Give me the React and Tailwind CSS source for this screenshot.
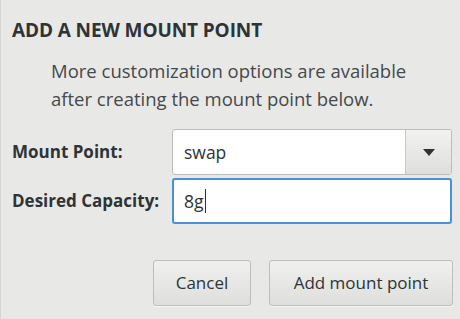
const font = { fontFamily: '"Open Sans", "DejaVu Sans", sans-serif' };

export default function App() {
  return (
    <div
      className="w-[460px] h-[319px] bg-[#e8e8e7] border-l border-[#d6d6d5] text-[#2e3436] flex flex-col"
      style={font}
    >
      <h1 className="pl-[11px] pt-[17px] text-[19px] font-bold leading-[26px] tracking-[-0.1px]">
        ADD A NEW MOUNT POINT
      </h1>

      <p className="pl-[50px] pt-[14px] text-[18.5px] leading-[28px] text-[#45494b]">
        More customization options are available
        <br />
        after creating the mount point below.
      </p>

      <div className="mt-[16px] grid grid-cols-[160px_280px] gap-y-[3px] pl-[11px] items-center">
        <label className="text-[17px] font-bold">Mount Point:</label>
        <div className="h-[46px] flex rounded-[3px] border border-[#bdbdbb] bg-white overflow-hidden">
          <div className="flex-1 flex items-center pl-[11px] text-[17.5px]">swap</div>
          <div className="w-[46px] flex items-center justify-center border-l border-[#c8c8c6] bg-gradient-to-b from-[#f2f2f1] to-[#dededd]">
            <svg width="12" height="7" viewBox="0 0 12 7">
              <path d="M0 0h12L6 7z" fill="#2e3436" />
            </svg>
          </div>
        </div>

        <label className="text-[17px] font-bold">Desired Capacity:</label>
        <div className="h-[46px] flex items-center rounded-[3px] border-2 border-[#4a90d9] bg-white pl-[10px] text-[17.5px]">
          8g<span className="inline-block w-px h-[24px] bg-[#2e3436] ml-[1px]" />
        </div>
      </div>

      <div className="mt-[36px] flex justify-end gap-[18px] pr-[7px]">
        <button className="w-[98px] h-[46px] rounded-[3px] border border-[#bdbdbb] bg-gradient-to-b from-[#f0f0ef] to-[#dededd] text-[17px] text-[#2e3436] shadow-[0_1px_0_rgba(255,255,255,0.6)]">
          Cancel
        </button>
        <button className="w-[184px] h-[46px] rounded-[3px] border border-[#bdbdbb] bg-gradient-to-b from-[#f0f0ef] to-[#dededd] text-[17px] text-[#2e3436] shadow-[0_1px_0_rgba(255,255,255,0.6)]">
          Add mount point
        </button>
      </div>
    </div>
  );
}
